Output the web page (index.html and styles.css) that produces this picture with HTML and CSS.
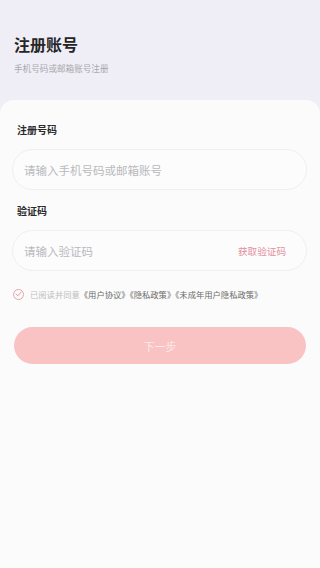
FILE: index.html
```html
<!DOCTYPE html>
<html lang="zh-CN">
<head>
    <meta charset="UTF-8">
    <meta name="viewport" content="width=device-width, initial-scale=1.0">
    <title>注册账号</title>
    <link rel="stylesheet" href="styles.css">
</head>
<body>
    <div class="header">
        <h1>注册账号</h1>
        <p class="sub">手机号码或邮箱账号注册</p>
    </div>
    <div class="card">
        <form class="form">
            <div class="form-group">
                <label for="account">注册号码</label>
                <div class="field">
                    <input type="text" id="account" placeholder="请输入手机号码或邮箱账号">
                </div>
            </div>
            <div class="form-group">
                <label for="code">验证码</label>
                <div class="field">
                    <input type="text" id="code" placeholder="请输入验证码">
                    <span class="get-code">获取验证码</span>
                </div>
            </div>
            <div class="agree">
                <span class="check">
                    <svg width="7" height="6" viewBox="0 0 7 6"><path d="M1 3.1 L2.9 4.8 L6 1.2" fill="none" stroke="#e58f98" stroke-width="0.9" stroke-linecap="round" stroke-linejoin="round"/></svg>
                </span>
                <span class="agree-text">已阅读并同意<em>《用户协议》《隐私政策》《未成年用户隐私政策》</em></span>
            </div>
            <button type="button">下一步</button>
        </form>
    </div>
</body>
</html>
```

FILE: styles.css
```css
html, body {
    height: 100%;
}
body {
    margin: 0;
    font-family: "Noto Sans CJK SC", "Noto Sans", sans-serif;
    background: linear-gradient(180deg, #efeef6 0%, #f2f0f5 100%);
    display: flex;
    flex-direction: column;
    overflow: hidden;
}
.header {
    height: 100px;
    box-sizing: border-box;
    padding: 33px 14px 0;
}
h1 {
    margin: 0;
    font-size: 16px;
    line-height: 22px;
    font-weight: 700;
    color: #262626;
}
.sub {
    margin: 7px 0 0;
    font-size: 8.6px;
    line-height: 12px;
    color: #a8a8ac;
}
.card {
    flex: 1;
    background: #fbfbfb;
    border-radius: 14px 14px 0 0;
    padding: 23px 13px 0 12px;
}
.form-group {
    margin-bottom: 14px;
}
label {
    display: block;
    padding-left: 5px;
    font-size: 10px;
    line-height: 14px;
    font-weight: 700;
    color: #2a2a2a;
    margin-bottom: 12px;
}
.field {
    display: flex;
    align-items: center;
    height: 41px;
    box-sizing: border-box;
    border: 1px solid #efefef;
    border-radius: 21px;
    background: #fcfcfc;
    padding: 0 20px 0 11px;
}
input {
    flex: 1;
    min-width: 0;
    border: none;
    outline: none;
    background: transparent;
    font-family: inherit;
    font-size: 11.5px;
    color: #333;
    padding: 0;
}
input::placeholder {
    color: #b9b9bc;
}
.get-code {
    font-size: 9.6px;
    color: #e3909c;
}
.agree {
    display: flex;
    align-items: center;
    margin-top: 17px;
    padding-left: 1px;
}
.check {
    width: 11px;
    height: 11px;
    box-sizing: border-box;
    border: 1px solid #e9a2a9;
    border-radius: 50%;
    display: flex;
    align-items: center;
    justify-content: center;
    margin-right: 6px;
}
.agree-text {
    font-size: 8.3px;
    line-height: 12px;
    color: #bdbdbd;
}
.agree-text em {
    font-style: normal;
    color: #6a6a6a;
}
button {
    display: block;
    width: 292px;
    height: 37px;
    margin: 27px 0 0 2px;
    border: none;
    border-radius: 19px;
    background-color: #f9c3c3;
    color: #fde9e9;
    font-family: inherit;
    font-size: 11px;
}
```
